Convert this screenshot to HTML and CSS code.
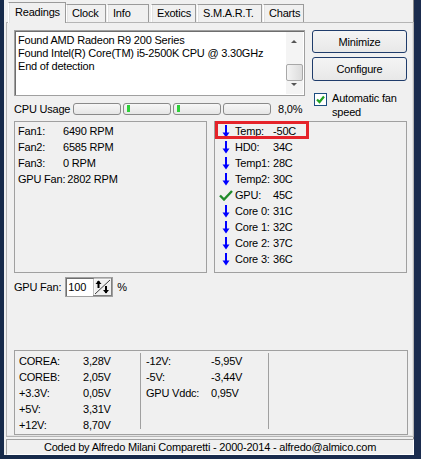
FILE: index.html
```html
<!DOCTYPE html>
<html>
<head>
<title>SpeedFan</title>
<link rel="stylesheet" href="styles.css">
</head>
<body>
  <div class="window">
    <div class="tabs">
      <div class="tab active">Readings</div>
      <div class="tab w-clock">Clock</div>
      <div class="tab w-info">Info</div>
      <div class="tab w-exotics">Exotics</div>
      <div class="tab w-smart">S.M.A.R.T.</div>
      <div class="tab w-charts">Charts</div>
    </div>

    <div class="panel">
      <div class="top">
        <div class="left-col">
          <div class="log">
            <div class="log-text">
              Found AMD Radeon R9 200 Series<br>
              Found Intel(R) Core(TM) i5-2500K CPU @ 3.30GHz<br>
              End of detection
            </div>
            <div class="scrollbar">
              <span class="arrow-up"></span>
              <span class="thumb"></span>
              <span class="arrow-down"></span>
            </div>
          </div>
          <div class="cpu-row">
            <span class="cpu-label">CPU Usage</span>
            <span class="bar"></span>
            <span class="bar"><i class="led"></i></span>
            <span class="bar"><i class="led"></i></span>
            <span class="bar"></span>
            <span class="cpu-value">8,0%</span>
          </div>
        </div>
        <div class="right-col">
          <button class="btn">Minimize</button>
          <button class="btn">Configure</button>
          <label class="check-row">
            <span class="checkbox">
              <svg width="11" height="11" viewBox="0 0 11 11"><path d="M2 5.5 L4.5 8 L9 2.5" fill="none" stroke="#21a121" stroke-width="2.2"/></svg>
            </span>
            <span>Automatic fan speed</span>
          </label>
        </div>
      </div>

      <div class="boxes">
        <div class="box fans">
          <div class="row"><span class="fan-label">Fan1:</span>6490 RPM</div>
          <div class="row"><span class="fan-label">Fan2:</span>6585 RPM</div>
          <div class="row"><span class="fan-label">Fan3:</span>0 RPM</div>
          <div class="row"><span class="fan-label">GPU Fan:</span>2802 RPM</div>
        </div>
        <div class="box temps">
          <div class="row"><span class="ico"><svg width="8" height="13" viewBox="0 0 8 13"><path d="M4 0 V9" stroke="#0000ff" stroke-width="2"/><path d="M0.5 7.5 L4 12.5 L7.5 7.5 Z" fill="#0000ff"/></svg></span><span class="t-label">Temp:</span>-50C</div>
          <div class="row"><span class="ico"><svg width="8" height="13" viewBox="0 0 8 13"><path d="M4 0 V9" stroke="#0000ff" stroke-width="2"/><path d="M0.5 7.5 L4 12.5 L7.5 7.5 Z" fill="#0000ff"/></svg></span><span class="t-label">HD0:</span>34C</div>
          <div class="row"><span class="ico"><svg width="8" height="13" viewBox="0 0 8 13"><path d="M4 0 V9" stroke="#0000ff" stroke-width="2"/><path d="M0.5 7.5 L4 12.5 L7.5 7.5 Z" fill="#0000ff"/></svg></span><span class="t-label">Temp1:</span>28C</div>
          <div class="row"><span class="ico"><svg width="8" height="13" viewBox="0 0 8 13"><path d="M4 0 V9" stroke="#0000ff" stroke-width="2"/><path d="M0.5 7.5 L4 12.5 L7.5 7.5 Z" fill="#0000ff"/></svg></span><span class="t-label">Temp2:</span>30C</div>
          <div class="row"><span class="ico"><svg width="14" height="11" viewBox="0 0 14 11"><path d="M1 5.5 L5 9.5 L13 1" fill="none" stroke="#1f8a2a" stroke-width="2.4"/></svg></span><span class="t-label">GPU:</span>45C</div>
          <div class="row"><span class="ico"><svg width="8" height="13" viewBox="0 0 8 13"><path d="M4 0 V9" stroke="#0000ff" stroke-width="2"/><path d="M0.5 7.5 L4 12.5 L7.5 7.5 Z" fill="#0000ff"/></svg></span><span class="t-label">Core 0:</span>31C</div>
          <div class="row"><span class="ico"><svg width="8" height="13" viewBox="0 0 8 13"><path d="M4 0 V9" stroke="#0000ff" stroke-width="2"/><path d="M0.5 7.5 L4 12.5 L7.5 7.5 Z" fill="#0000ff"/></svg></span><span class="t-label">Core 1:</span>32C</div>
          <div class="row"><span class="ico"><svg width="8" height="13" viewBox="0 0 8 13"><path d="M4 0 V9" stroke="#0000ff" stroke-width="2"/><path d="M0.5 7.5 L4 12.5 L7.5 7.5 Z" fill="#0000ff"/></svg></span><span class="t-label">Core 2:</span>37C</div>
          <div class="row"><span class="ico"><svg width="8" height="13" viewBox="0 0 8 13"><path d="M4 0 V9" stroke="#0000ff" stroke-width="2"/><path d="M0.5 7.5 L4 12.5 L7.5 7.5 Z" fill="#0000ff"/></svg></span><span class="t-label">Core 3:</span>36C</div>
          <div class="highlight"></div>
        </div>
      </div>

      <div class="gpu-row">
        <span>GPU Fan:</span>
        <span class="spin">
          <span class="spin-value">100</span>
          <svg class="spin-btn" width="19" height="18" viewBox="0 0 19 18">
            <rect x="0.5" y="0.5" width="18" height="17" fill="#f0f0f0" stroke="#808080"/>
            <path d="M1 1 H18 M1 1 V17" stroke="#fff"/>
            <path d="M2 16 L17 2" stroke="#404040"/>
            <path d="M5.5 3 V10" stroke="#000" stroke-width="2"/>
            <path d="M2.5 6 L5.5 2.5 L8.5 6 Z" fill="#000"/>
            <path d="M13 8 V15" stroke="#000" stroke-width="2"/>
            <path d="M10 12 L13 15.5 L16 12 Z" fill="#000"/>
          </svg>
        </span>
        <span>%</span>
      </div>

      <div class="volt-box">
        <div class="vcol first">
          <div class="row"><span class="v1-label">COREA:</span>3,28V</div>
          <div class="row"><span class="v1-label">COREB:</span>2,05V</div>
          <div class="row"><span class="v1-label">+3.3V:</span>0,05V</div>
          <div class="row"><span class="v1-label">+5V:</span>3,31V</div>
          <div class="row"><span class="v1-label">+12V:</span>8,70V</div>
        </div>
        <div class="vcol second">
          <div class="row"><span class="v2-label">-12V:</span>-5,95V</div>
          <div class="row"><span class="v2-label">-5V:</span>-3,44V</div>
          <div class="row"><span class="v2-label">GPU Vddc:</span>0,95V</div>
        </div>
        <div class="vcol third"></div>
      </div>
    </div>

    <div class="status">Coded by Alfredo Milani Comparetti - 2000-2014 - alfredo@almico.com</div>
  </div>
</body>
</html>
```

FILE: styles.css
```css
html, body {
  margin: 0;
  height: 100%;
}

body {
  background: linear-gradient(90deg, #162a4a 0%, #1b2c4e 100%);
  font-family: "Liberation Sans", Arial, sans-serif;
  font-size: 11px;
  letter-spacing: -0.2px;
  color: #000;
  overflow: hidden;
}

.window {
  margin-left: 4px;
  width: 410px;
  height: 455px;
  background: #f0f0f0;
  border-right: 1px solid #8a8a8a;
  box-sizing: border-box;
}

/* tabs */
.tabs {
  display: flex;
  align-items: flex-end;
  height: 22px;
  padding-left: 4px;
}

.tab {
  height: 18px;
  line-height: 17px;
  padding: 0 0 0 5px;
  border: 1px solid #9a9a9a;
  border-bottom: none;
  border-left-color: #fff;
  box-shadow: inset 1px 0 0 #e3e3e3;
  box-sizing: border-box;
  margin-right: 1px;
  white-space: nowrap;
  overflow: hidden;
}

.tab.active {
  height: 21px;
  width: 58px;
  line-height: 18px;
  padding-left: 6px;
  position: relative;
  top: 1px;
  background: #f0f0f0;
  margin-right: 0;
  z-index: 1;
}

.w-clock { width: 40px; }
.w-info { width: 42px; margin-right: 2px; }
.w-exotics { width: 45px; }
.w-smart { width: 65px; }
.w-charts { width: 41px; }

/* main panel */
.panel {
  margin-left: 2px;
  width: 408px;
  height: 415px;
  border: 1px solid #9a9a9a;
  border-left-color: #fff;
  border-top-color: #fff;
  box-shadow: inset -1px -1px 0 #e3e3e3;
  outline: 1px solid #b5b5b5;
  outline-offset: -1px;
  box-sizing: border-box;
  padding: 7px 5px 4px 7px;
}

.top {
  display: flex;
  gap: 7px;
}

.left-col {
  width: 291px;
}

.log {
  height: 66px;
  display: flex;
  background: #fff;
  border: 1px solid #a0a0a0;
  box-shadow: inset 1px 1px 0 #6e6e6e;
  box-sizing: border-box;
}

.log-text {
  flex: 1;
  padding: 3px 0 0 3px;
  line-height: 13px;
  white-space: nowrap;
}

.scrollbar {
  width: 17px;
  margin: 1px 1px 1px 0;
  background: #f4f4f4;
  position: relative;
}

.arrow-up, .arrow-down {
  position: absolute;
  left: 5px;
  width: 0;
  height: 0;
  border-left: 3.5px solid transparent;
  border-right: 3.5px solid transparent;
}

.arrow-up {
  top: 8px;
  border-bottom: 3px solid #555;
}

.arrow-down {
  bottom: 8px;
  border-top: 3px solid #555;
}

.thumb {
  position: absolute;
  left: 0;
  top: 32px;
  width: 15px;
  height: 15px;
  border: 1px solid #a8a8a8;
  border-radius: 2px;
  background: linear-gradient(90deg, #f4f4f4, #dcdcdc);
}

.cpu-row {
  display: flex;
  align-items: center;
  height: 14px;
  margin-top: 6px;
  gap: 2px;
}

.cpu-label {
  width: 57px;
  white-space: nowrap;
}

.bar {
  width: 48px;
  height: 12px;
  border: 1px solid #8a8a8a;
  border-radius: 3px;
  box-sizing: border-box;
  background: linear-gradient(#f7f7f7, #e6e6e6);
  position: relative;
}

.led {
  position: absolute;
  left: 3px;
  top: 1px;
  width: 3px;
  height: 7px;
  background: #2ed03a;
}

.cpu-value {
  margin-left: 5px;
}

.right-col {
  width: 95px;
  display: flex;
  flex-direction: column;
}

.btn {
  height: 23px;
  border: 1px solid #1f3c6b;
  border-radius: 3px;
  background: linear-gradient(#f4f4f4, #e8e8e8);
  font-family: inherit;
  font-size: 11px;
  letter-spacing: inherit;
  padding: 0;
  margin-bottom: 4px;
}

.btn + .btn {
  height: 24px;
}

.check-row {
  display: flex;
  gap: 5px;
  margin-top: 6px;
  padding-left: 2px;
  line-height: 14px;
}

.checkbox {
  flex: none;
  width: 13px;
  height: 13px;
  margin-top: 2px;
  border: 1px solid #1c4d80;
  background: #fff;
  box-sizing: border-box;
  display: flex;
  align-items: center;
  justify-content: center;
}

/* readings boxes */
.boxes {
  display: flex;
  gap: 7px;
  margin-top: 2px;
}

.box {
  width: 193px;
  height: 152px;
  border: 1px solid #a0a0a0;
  border-right-color: #fff;
  border-bottom-color: #fff;
  outline: 1px solid #a0a0a0;
  outline-offset: -1px;
  box-sizing: border-box;
  padding-top: 1px;
}

.row {
  height: 16px;
  line-height: 16px;
  display: flex;
  white-space: nowrap;
}

.fans {
  padding-left: 3px;
}

.fan-label {
  min-width: 45px;
  padding-right: 2px;
  box-sizing: border-box;
}

.temps {
  position: relative;
  padding-left: 4px;
}

.ico {
  width: 14px;
  margin-right: 2px;
  display: flex;
  align-items: center;
  justify-content: center;
}

.t-label {
  min-width: 38px;
  padding-right: 2px;
  box-sizing: border-box;
}

.highlight {
  position: absolute;
  left: 0;
  top: -1px;
  width: 94px;
  height: 18px;
  border: 3px solid #e5232a;
  box-sizing: border-box;
}

/* gpu fan */
.gpu-row {
  display: flex;
  align-items: center;
  height: 20px;
  margin-top: 4px;
}

.spin {
  display: flex;
  align-items: center;
  width: 48px;
  height: 20px;
  margin: 0 4px 0 4px;
  background: #fff;
  border: 1px solid #a0a0a0;
  box-shadow: inset 1px 1px 0 #6e6e6e;
  box-sizing: border-box;
}

.spin-value {
  flex: 1;
  padding-left: 2px;
}

.spin-btn {
  display: block;
}

/* voltages */
.volt-box {
  display: flex;
  height: 85px;
  margin-top: 53px;
  border: 1px solid #a0a0a0;
  border-right-color: #fff;
  border-bottom-color: #fff;
  outline: 1px solid #a0a0a0;
  outline-offset: -1px;
  box-sizing: border-box;
}

.vcol.first,
.vcol.second {
  width: 126px;
  box-sizing: border-box;
  border-right: 1px solid #a0a0a0;
  margin: 4px 0 3px;
  position: relative;
  top: -2px;
}

.vcol.first {
  padding-left: 4px;
}

.vcol.second {
  width: 128px;
  padding-left: 5px;
}

.v1-label {
  width: 64px;
}

.v2-label {
  min-width: 60px;
  margin-right: 5px;
}

/* status bar */
.status {
  margin: 2px 0 0 2px;
  width: 408px;
  height: 16px;
  line-height: 15px;
  border: 1px solid #a0a0a0;
  border-right-color: #fff;
  border-bottom-color: #fff;
  box-sizing: border-box;
  text-align: center;
}
```
